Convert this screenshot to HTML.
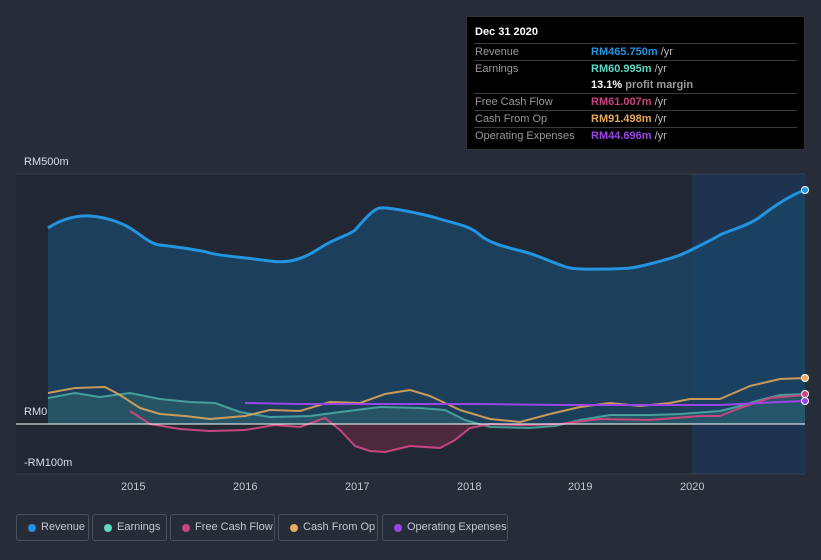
<!DOCTYPE html>
<html><head><meta charset="utf-8"><style>
body{margin:0;width:821px;height:560px;background:#262c38;font-family:"Liberation Sans",sans-serif;overflow:hidden;position:relative}
.tt{position:absolute;left:466px;top:16px;width:339px;height:134px;background:#000;border:1px solid #333;box-sizing:border-box;font-size:11px;color:#999}
.tt .h{color:#fff;font-weight:bold;padding:9px 0 0 8px;height:17px}
.row{margin:0 7px;border-top:1px solid #3a3a3a;height:16px;line-height:16px;position:relative;padding-left:1px}
.row .v{position:absolute;left:117px;top:0;font-weight:bold}
.row .v i{font-style:normal;font-weight:normal;color:#bbb}
.leg{position:absolute;top:514px;height:27px;border:1px solid #4a505c;border-radius:3px;box-sizing:border-box;color:#c4c8d0;font-size:11px;line-height:25px;padding-left:24px;white-space:nowrap}
.leg b{position:absolute;left:11px;top:9px;width:8px;height:8px;border-radius:50%}
.lab{position:absolute;color:#dde;font-size:11px}
</style></head><body>
<svg width="821" height="560" style="position:absolute;left:0;top:0">
<rect x="16" y="174" width="676" height="300" fill="#222833"/>
<rect x="692" y="174" width="113" height="300" fill="#1d3350"/>
<line x1="16" y1="174" x2="805" y2="174" stroke="#3a404c"/>
<line x1="16" y1="474" x2="805" y2="474" stroke="#3a404c"/>
<path d="M48,228 C60,220 75,215 90,216 S120,222 130,228 S150,244 160,245 S200,250 210,253 S250,258 270,261 S305,258 320,248 S350,235 355,230 S372,209 380,208 S420,213 440,219 S470,226 480,235 S510,248 525,252 S560,266 570,268 S620,269 630,268 S670,259 680,255 S715,238 720,235 S750,225 760,217 S790,195 805,190 L805,424 L48,424 Z" fill="#1b4565" opacity="0.8"/>
<path d="M48,228 C60,220 75,215 90,216 S120,222 130,228 S150,244 160,245 S200,250 210,253 S250,258 270,261 S305,258 320,248 S350,235 355,230 S372,209 380,208 S420,213 440,219 S470,226 480,235 S510,248 525,252 S560,266 570,268 S620,269 630,268 S670,259 680,255 S715,238 720,235 S750,225 760,217 S790,195 805,190" fill="none" stroke="#2394df" stroke-width="3"/>
<path d="M48,398 L75,393 L100,397 L130,393 L160,399 L190,402 L215,403 L240,412 L270,417 L310,416 L340,412 L380,407 L420,408 L445,410 L465,420 L490,427 L530,428 L555,426 L580,420 L610,415 L650,415 L680,414 L720,411 L740,406 L760,400 L780,395 L805,394 L805,424 L48,424Z" fill="#3a7a78" opacity="0.35"/>
<path d="M340,430 L355,446 L370,451 L385,452 L410,446 L440,448 L455,440 L470,428 L470,424 L330,424Z" fill="#6a2a44" opacity="0.6"/>
<polyline points="48,398 75,393 100,397 130,393 160,399 190,402 215,403 240,412 270,417 310,416 340,412 380,407 420,408 445,410 465,420 490,427 530,428 555,426 580,420 610,415 650,415 680,414 720,411 740,406 760,400 780,395 805,394" fill="none" stroke="#5fd8c4" stroke-width="2" stroke-linejoin="round" opacity="0.6"/>
<polyline points="130,411 150,424 180,429 210,431 245,430 275,425 300,427 325,418 340,430 355,446 370,451 385,452 410,446 440,448 455,440 470,428 490,424 520,425 560,424 600,419 650,420 700,416 720,416 740,408 770,398 805,395" fill="none" stroke="#c8457f" stroke-width="2" stroke-linejoin="round"/>
<polyline points="48,393 75,388 105,387 120,395 140,408 160,414 185,416 210,419 245,416 270,410 300,411 330,402 360,403 385,394 410,390 430,396 460,410 490,419 520,422 550,414 580,407 610,403 640,406 670,403 690,399 720,399 750,386 780,379 805,378" fill="none" stroke="#e8a95a" stroke-width="2" stroke-linejoin="round" opacity="0.85"/>
<polyline points="245,403 300,404 400,404 480,404 560,405 650,405 720,405 780,402 805,401" fill="none" stroke="#9b44e8" stroke-width="2"/>
<line x1="16" y1="424" x2="805" y2="424" stroke="#fff" stroke-width="1"/>
<circle cx="805" cy="190" r="3.5" fill="#2394df" stroke="#fff"/>
<circle cx="805" cy="378" r="3.5" fill="#e8a95a" stroke="#fff"/>
<circle cx="805" cy="394" r="3.5" fill="#c8457f" stroke="#fff"/>
<circle cx="805" cy="401" r="3.5" fill="#9b44e8" stroke="#fff"/>
</svg>
<div class="lab" style="left:24px;top:156px">RM500m</div>
<div class="lab" style="left:24px;top:406px">RM0</div>
<div class="lab" style="left:24px;top:457px">-RM100m</div>
<div class="lab" style="left:121px;top:481px;color:#c4c8d0">2015</div>
<div class="lab" style="left:233px;top:481px;color:#c4c8d0">2016</div>
<div class="lab" style="left:345px;top:481px;color:#c4c8d0">2017</div>
<div class="lab" style="left:457px;top:481px;color:#c4c8d0">2018</div>
<div class="lab" style="left:568px;top:481px;color:#c4c8d0">2019</div>
<div class="lab" style="left:680px;top:481px;color:#c4c8d0">2020</div>
<div class="tt">
<div class="h">Dec 31 2020</div>
<div class="row">Revenue<span class="v" style="color:#2394df">RM465.750m <i>/yr</i></span></div>
<div class="row">Earnings<span class="v" style="color:#5fd8c4">RM60.995m <i>/yr</i></span></div>
<div class="row" style="border-top:none"><span class="v" style="color:#fff">13.1% <i style="color:#999;font-weight:bold">profit margin</i></span></div>
<div class="row">Free Cash Flow<span class="v" style="color:#c8457f">RM61.007m <i>/yr</i></span></div>
<div class="row">Cash From Op<span class="v" style="color:#e8a95a">RM91.498m <i>/yr</i></span></div>
<div class="row">Operating Expenses<span class="v" style="color:#9b44e8">RM44.696m <i>/yr</i></span></div>
</div>
<div class="leg" style="left:16px;width:73px"><b style="background:#2394df"></b>Revenue</div>
<div class="leg" style="left:92px;width:75px"><b style="background:#5fd8c4"></b>Earnings</div>
<div class="leg" style="left:170px;width:105px"><b style="background:#c8457f"></b>Free Cash Flow</div>
<div class="leg" style="left:278px;width:100px"><b style="background:#e8a95a"></b>Cash From Op</div>
<div class="leg" style="left:382px;width:126px"><b style="background:#9b44e8"></b>Operating Expenses</div>
</body></html>
